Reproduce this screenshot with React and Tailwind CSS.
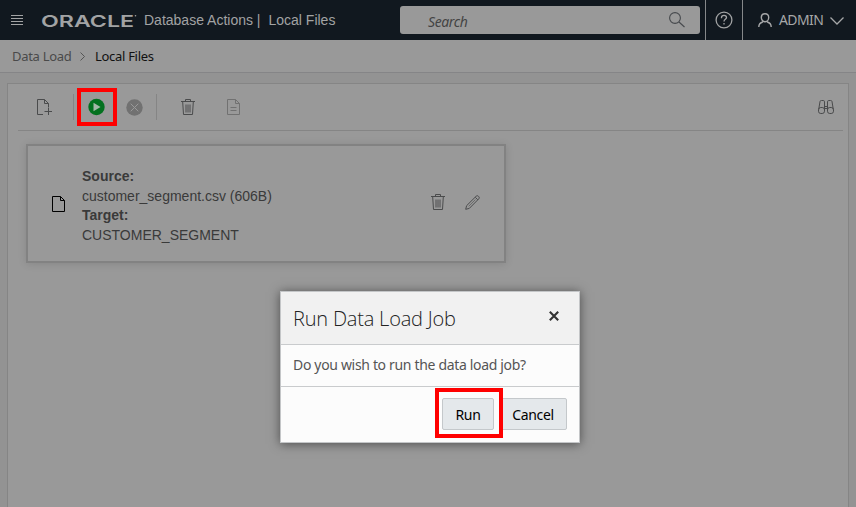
import React from "react";

function TrashIcon({ className }) {
  return (
    <svg className={className} width="14" height="16" viewBox="0 0 14 16" fill="none" stroke="currentColor" strokeWidth="1">
      <path d="M0 2.5h14M4.5 2.5v-2h5v2M1.7 3l.8 12.5h9L12.3 3M5 5.5v8M7 5.5v8M9 5.5v8" />
    </svg>
  );
}

function FileIcon({ className }) {
  return (
    <svg className={className} width="13" height="16" viewBox="0 0 13 16" fill="none" stroke="currentColor" strokeWidth="1">
      <path d="M.5.5h8l4 4v11H.5zM8.500.5v4h4" />
    </svg>
  );
}

function Header() {
  return (
    <header className="flex h-10 shrink-0 items-center bg-[#11181f] text-[#a2a3a4]">
      <svg className="ml-[11px]" width="12" height="10" viewBox="0 0 12 10" stroke="currentColor" strokeWidth="1">
        <path d="M0 .5h12M0 3.500h12M0 6.500h12M0 9.500h12" />
      </svg>
      <svg className="ml-[18px] mt-px overflow-visible" width="97" height="20" viewBox="0 -3 97 20" fill="currentColor">
        <text x="0" y="12.500" fontFamily="Inter, sans-serif" fontWeight="600" fontSize="16" textLength="93" lengthAdjust="spacingAndGlyphs">ORACLE</text>
        <circle cx="94.500" cy="1.800" r=".8" />
      </svg>
      <div className="ml-[6px] flex items-center whitespace-pre font-['Liberation_Sans',Arial,sans-serif] text-[14px]">
        <span>Database Actions |</span>
        <span className="ml-2">Local Files</span>
      </div>
      <div className="ml-auto flex h-7 w-[300px] items-center justify-between rounded-[3px] bg-[#999] pl-[28px] pr-[15px] text-[#444]">
        <span className="pt-0.5 text-[14px] italic tracking-[-0.4px]">Search</span>
        <svg className="mt-[-1px]" width="16" height="16" viewBox="0 0 16 16" fill="none" stroke="#46494d" strokeWidth="1.100">
          <circle cx="6" cy="6" r="5.400" />
          <path d="M10 10l5.500 5" />
        </svg>
      </div>
      <div className="ml-[5px] flex h-full w-[38px] items-center justify-center border-x border-[#86888a]">
        <svg width="18" height="18" viewBox="0 0 18 18" fill="none" stroke="currentColor" strokeWidth="1.300">
          <circle cx="9" cy="9" r="7.900" />
          <path d="M6.500 7.200V6.500a2.500 2.200 0 0 1 5 0c0 1.800-2.500 1.900-2.500 4" />
          <path d="M9 12v1.500" />
        </svg>
      </div>
      <div className="flex w-[113px] items-center pl-[15px] text-[#a6a7a8]">
        <svg width="14" height="14" viewBox="0 0 14 14" fill="none" stroke="currentColor" strokeWidth="1.400">
          <path d="M7 .7c2.300 0 3.700 1.700 3.700 3.900S9 8.800 7 8.800 3.300 6.800 3.300 4.600 4.700.7 7 .7zM.8 14c0-2.500 1.600-4.300 4-5M13.200 14c0-2.500-1.600-4.300-4-5" />
        </svg>
        <span className="-mt-px ml-[7px] w-[44px] text-[14px] tracking-[-0.6px]">ADMIN</span>
        <svg className="ml-[7px] mt-px" width="14" height="8" viewBox="0 0 14 8" fill="none" stroke="currentColor" strokeWidth="1.300">
          <path d="M.5.5L7 7l6.500-6.500" />
        </svg>
      </div>
    </header>
  );
}

function Breadcrumb() {
  return (
    <nav className="flex h-[33px] shrink-0 items-center border-b border-[#858587] bg-[#999] pl-3 pt-px text-[13px] tracking-[-0.3px]">
      <span className="w-[58px] whitespace-nowrap text-[#4a4a4a]">Data Load</span>
      <svg className="ml-[10px]" width="5" height="9" viewBox="0 0 5 9" fill="none" stroke="#555" strokeWidth="1">
        <path d="M.5.5l4 4-4 4" />
      </svg>
      <span className="ml-[10px] text-[#111]">Local Files</span>
    </nav>
  );
}

function Toolbar() {
  return (
    <div className="ml-[10px] mr-[5px] flex h-[47px] items-center border-b border-[#858585] text-[#4a4b4c]">
      <svg className="ml-[19px]" width="15" height="16" viewBox="0 0 15 16" fill="none" stroke="currentColor" strokeWidth="1">
        <path d="M6 15.500H.5V.5h7l4 4v4M7.500.5v4h4M7.500 12.500h7.500M11.500 9v7" />
      </svg>
      <div className="ml-[21px] h-[26px] w-px bg-[#858585]" />
      <div className="relative ml-[14px] flex">
        <svg width="17" height="18" viewBox="0 0 17 18">
          <circle cx="8.500" cy="9" r="8.200" fill="#04711f" />
          <path d="M5.500 4.700v8.600L12.500 9z" fill="#a4b8a8" />
        </svg>
        <div className="absolute -left-[11.500px] -top-[10px] h-[38px] w-[40.500px] border-4 border-[#ff0000]" />
      </div>
      <svg className="ml-[21px]" width="17" height="17" viewBox="0 0 17 17">
        <circle cx="8.500" cy="8.500" r="8.200" fill="#717171" />
        <path d="M4.700 4.700l7.600 7.600M12.300 4.700l-7.600 7.600" stroke="#999" strokeWidth="1" />
      </svg>
      <div className="ml-[13px] h-[26px] w-px bg-[#858585]" />
      <TrashIcon className="ml-[24px]" />
      <svg className="ml-[32px] text-[#717171]" width="13" height="16" viewBox="0 0 13 16" fill="none" stroke="currentColor" strokeWidth="1">
        <path d="M.5.5h8l4 4v11H.5zM8.500.5v4h4M3.500 8.500h6M3.500 11.500h6" />
      </svg>
      <svg className="ml-auto mr-[9px]" width="16" height="14" viewBox="0 0 16 14" fill="none" stroke="currentColor" strokeWidth="1">
        <path d="M.7 9.500L2 1.500C2.200.6 2.800.5 3.500.5h1.800c.8 0 1.200.5 1.200 1.300v9M15.300 9.500L14 1.500C13.800.6 13.200.5 12.500.5h-1.800c-.8 0-1.200.5-1.200 1.300v9M6.500 6.500h3M6.500 8.500h3" />
        <rect x=".5" y="7.500" width="6" height="6" rx="2.300" />
        <rect x="9.500" y="7.500" width="6" height="6" rx="2.300" />
      </svg>
    </div>
  );
}

function FileCard() {
  return (
    <section className="ml-[18px] mt-[13px] flex h-[119px] w-[480px] items-center border-2 border-[#828282] bg-[#999] shadow-[0_1px_8px_rgba(0,0,0,0.12)]">
      <FileIcon className="ml-[24px] text-black" />
      <div className="ml-[17px] mt-[5px] font-['Liberation_Sans',Arial,sans-serif] text-[14px] leading-[19.500px] text-[#3a3a3a]">
        <p className="font-bold">Source:</p>
        <p>customer_segment.csv (606B)</p>
        <p className="font-bold">Target:</p>
        <p>CUSTOMER_SEGMENT</p>
      </div>
      <TrashIcon className="-mt-[3px] ml-auto text-[#4a4b4c]" />
      <svg className="-mt-[3px] ml-[20px] mr-[24px]" width="15" height="15" viewBox="0 0 15 15" fill="none" stroke="#4a4b4c" strokeWidth="1">
        <path d="M.7 14.300l.9-3.600 9.600-9.500a1.500 1.500 0 0 1 2.100 0l.5.500a1.500 1.500 0 0 1 0 2.100l-9.500 9.600zM10.300 2.300l2.500 2.500" />
        <path d="M3.700 11.300l6.800-6.800" strokeWidth=".6" />
      </svg>
    </section>
  );
}

function Dialog() {
  return (
    <div className="absolute left-[280px] top-[291px] flex h-[152px] w-[300px] flex-col border border-[#c4c6c8] bg-[#fcfcfc] shadow-[0_1px_10px_rgba(0,0,0,0.5)]">
      <div className="flex h-[53px] items-center justify-between border-b border-[#c9cbcd] bg-[#f1f1f1] pl-3 pr-5">
        <h1 className="pt-0.5 font-['Open_Sans',sans-serif] text-[20px] font-[350] tracking-[-0.2px] text-[#222]">Run Data Load Job</h1>
        <svg className="-mt-1" width="10" height="10" viewBox="0 0 10 10" stroke="#333" strokeWidth="2.100">
          <path d="M.8.8l8.400 8.400M9.200.8L.8 9.200" />
        </svg>
      </div>
      <p className="flex h-[42px] items-center border-b border-[#c9cbcd] pb-[2px] pl-3 text-[14px] tracking-[-0.33px] text-[#555]">
        Do you wish to run the data load job?
      </p>
      <div className="flex flex-1 items-center justify-end gap-[5px] pb-px pr-3 text-[14px] text-black">
        <div className="relative">
          <button className="h-8 w-[52px] rounded-[2px] border border-[#c4c8cb] bg-[#e4e8eb] tracking-[-0.35px]">Run</button>
          <div className="absolute -left-[7.500px] -top-[10px] z-10 h-[49.500px] w-[68px] border-4 border-[#ff0000]" />
        </div>
        <button className="h-8 w-[68px] rounded-[2px] border border-[#c4c8cb] bg-[#e4e8eb] tracking-[-0.35px]">Cancel</button>
      </div>
    </div>
  );
}

export default function App() {
  return (
    <div className="relative flex h-[507px] w-[856px] flex-col overflow-hidden bg-[#939393] font-['Noto_Sans','Open_Sans',sans-serif]">
      <Header />
      <Breadcrumb />
      <main className="mx-[7px] mt-[10px] flex-1 border border-b-0 border-[#858585] bg-[#999]">
        <Toolbar />
        <FileCard />
      </main>
      <Dialog />
    </div>
  );
}
